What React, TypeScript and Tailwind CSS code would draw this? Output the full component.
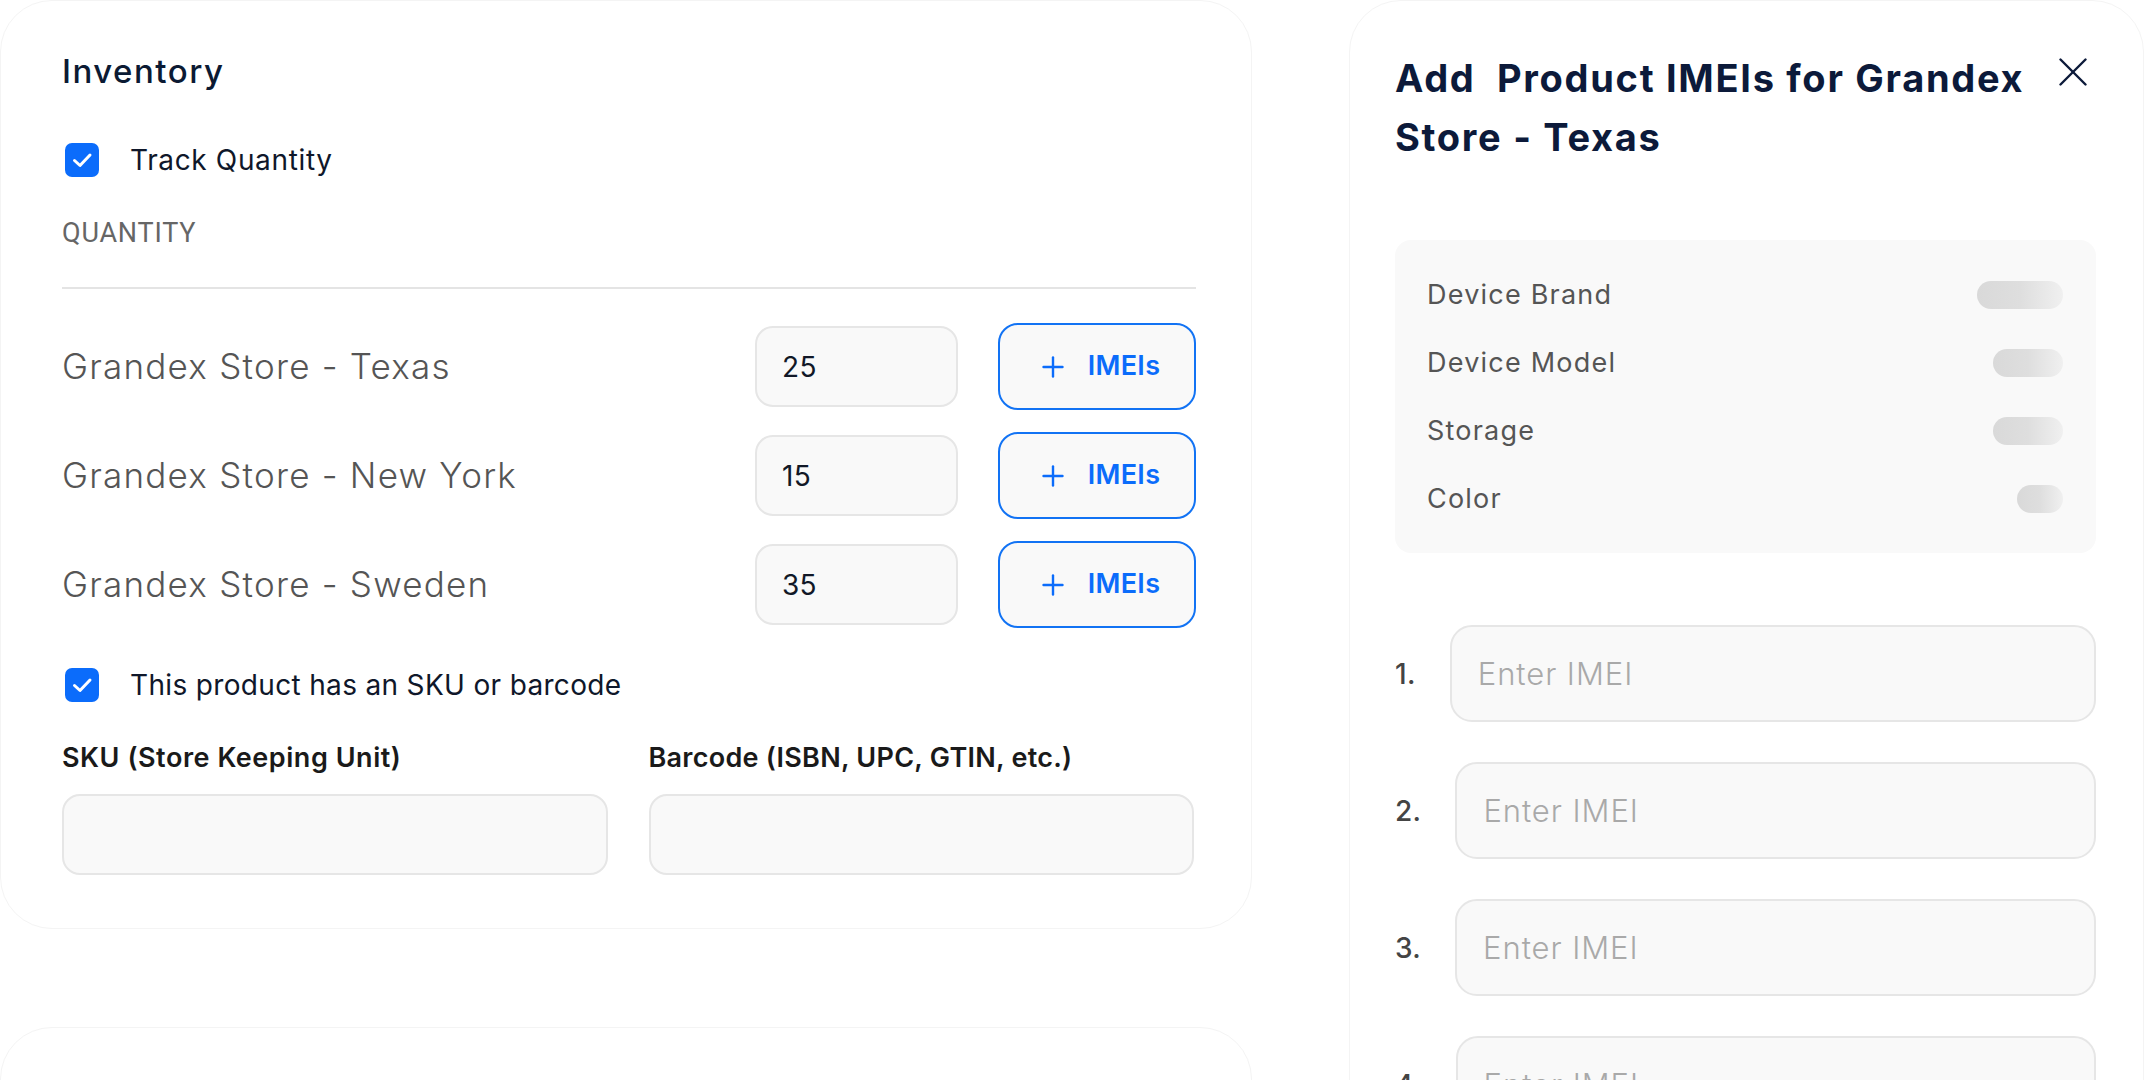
const stores = [
  { name: 'Grandex Store - Texas', qty: '25' },
  { name: 'Grandex Store - New York', qty: '15' },
  { name: 'Grandex Store - Sweden', qty: '35' },
];

const specs = [
  { label: 'Device Brand', pill: 'w-[86px]' },
  { label: 'Device Model', pill: 'w-[70px]' },
  { label: 'Storage', pill: 'w-[70px]' },
  { label: 'Color', pill: 'w-[46px]' },
];

function Check() {
  return (
    <span className="ml-[3px] w-[34px] h-[34px] rounded-[7px] bg-[#0b6cfb] flex items-center justify-center shrink-0">
      <svg width="34" height="34" viewBox="0 0 34 34" fill="none">
        <polyline points="9.5,17.5 15,22.5 25,12" stroke="white" strokeWidth="3" strokeLinecap="round" strokeLinejoin="round" />
      </svg>
    </span>
  );
}

function PlusIcon() {
  return (
    <svg width="22" height="22" viewBox="0 0 22 22" fill="none" stroke="currentColor" strokeWidth="2.4" strokeLinecap="round">
      <line x1="11" y1="1.5" x2="11" y2="20.5" />
      <line x1="1.5" y1="11" x2="20.5" y2="11" />
    </svg>
  );
}

export default function App() {
  return (
    <div className="w-[2144px] h-[1080px] overflow-hidden bg-white flex [font-family:Inter,sans-serif] tracking-[0.02em]">
      {/* Inventory column */}
      <div className="w-[1252px] shrink-0 flex flex-col gap-[98px]">
        <section className="h-[929px] shrink-0 rounded-[52px] border border-[#f4f4f4] pl-[61px] pr-[55px] pt-[50px] flex flex-col">
          <h2 className="text-[33px] leading-[40px] font-medium text-[#0b1a33] tracking-[0.045em]">Inventory</h2>

          <label className="mt-[52px] flex items-center gap-[31px] h-[34px]">
            <Check />
            <span className="text-[28px] leading-[34px] text-[#0f172a] tracking-[0.023em]">Track Quantity</span>
          </label>

          <div className="mt-[39px] [font-family:Roboto,sans-serif] text-[27px] leading-[34px] text-[#666666] tracking-[0.03em]">QUANTITY</div>
          <div className="mt-[37px] h-[2px] bg-[#e4e4e4]" />

          <div className="mt-[34px] flex flex-col gap-[22px]">
            {stores.map((s) => (
              <div key={s.name} className="flex items-center h-[87px]">
                <span className="flex-1 text-[35px] font-light text-[#555555] tracking-[0.035em]">{s.name}</span>
                <input
                  readOnly
                  value={s.qty}
                  className="w-[203px] h-[81px] rounded-[18px] border-2 border-[#e6e6e6] bg-[#f9f9f9] px-[25px] text-[28px] text-[#111827] outline-none"
                />
                <button className="ml-[40px] w-[198px] h-[87px] rounded-[20px] border-2 border-[#1273f4] bg-[#f9f9f9] pl-[8px] flex items-center justify-center gap-[24px] text-[#0b6cfb]">
                  <PlusIcon />
                  <span className="text-[27px] font-semibold">IMEIs</span>
                </button>
              </div>
            ))}
          </div>

          <label className="mt-[40px] flex items-center gap-[31px] h-[34px]">
            <Check />
            <span className="text-[28px] leading-[34px] text-[#0f172a] tracking-[0.012em]">This product has an SKU or barcode</span>
          </label>

          <div className="mt-[39px] mr-[2px] grid grid-cols-2 gap-x-[41px] gap-y-[19px]">
            <span className="text-[27px] leading-[34px] font-semibold text-[#1a1a1a] tracking-[0.02em]">SKU (Store Keeping Unit)</span>
            <span className="text-[27px] leading-[34px] font-semibold text-[#1a1a1a] tracking-[0.01em]">Barcode (ISBN, UPC, GTIN, etc.)</span>
            <input readOnly className="h-[81px] rounded-[18px] border-2 border-[#e6e6e6] bg-[#f9f9f9] outline-none" />
            <input readOnly className="h-[81px] rounded-[18px] border-2 border-[#e6e6e6] bg-[#f9f9f9] outline-none" />
          </div>
        </section>
        <div className="h-[200px] shrink-0 rounded-[52px] border border-[#f4f4f4]" />
      </div>

      {/* IMEI panel */}
      <section className="ml-[97px] flex-1 h-[1200px] rounded-t-[52px] border border-[#f4f4f4] pl-[45px] pr-[47px] pt-[48px] flex flex-col">
        <div className="flex items-start justify-between">
          <h1 className="max-w-[680px] text-[38px] leading-[59px] font-bold text-[#0c1a3a] tracking-[0.045em] whitespace-pre-wrap">
            {'Add  Product IMEIs for Grandex\nStore - Texas'}
          </h1>
          <svg width="28" height="28" viewBox="0 0 28 28" fill="none" stroke="#0c1a3a" strokeWidth="2.4" strokeLinecap="round" className="mt-[9px] mr-[9px] shrink-0">
            <line x1="1.5" y1="1.5" x2="26.5" y2="26.5" />
            <line x1="26.5" y1="1.5" x2="1.5" y2="26.5" />
          </svg>
        </div>

        <div className="mt-[73px] h-[313px] rounded-[16px] bg-[#f9f9f9] pl-[32px] pr-[33px] pt-[38px] flex flex-col gap-[34px]">
          {specs.map((s) => (
            <div key={s.label} className="flex items-center justify-between h-[34px]">
              <span className="text-[27px] leading-[34px] text-[#555555] tracking-[0.045em]">{s.label}</span>
              <span className={`${s.pill} h-[28px] rounded-full bg-gradient-to-r from-[#d9d9d9] via-[#dedede] to-[#f0f0f0]`} />
            </div>
          ))}
        </div>

        <div className="mt-[72px] flex flex-col gap-[40px]">
          {[1, 2, 3, 4].map((n) => (
            <div key={n} className="flex items-center gap-[34px]">
              <span className="text-[28px] font-medium text-[#444444]">{n}.</span>
              <input
                readOnly
                placeholder="Enter IMEI"
                className="flex-1 h-[97px] rounded-[22px] border-2 border-[#e6e6e6] bg-[#f9f9f9] px-[26px] text-[31px] font-light tracking-[0.03em] outline-none placeholder:text-[#a9a9a9]"
              />
            </div>
          ))}
        </div>
      </section>
    </div>
  );
}
